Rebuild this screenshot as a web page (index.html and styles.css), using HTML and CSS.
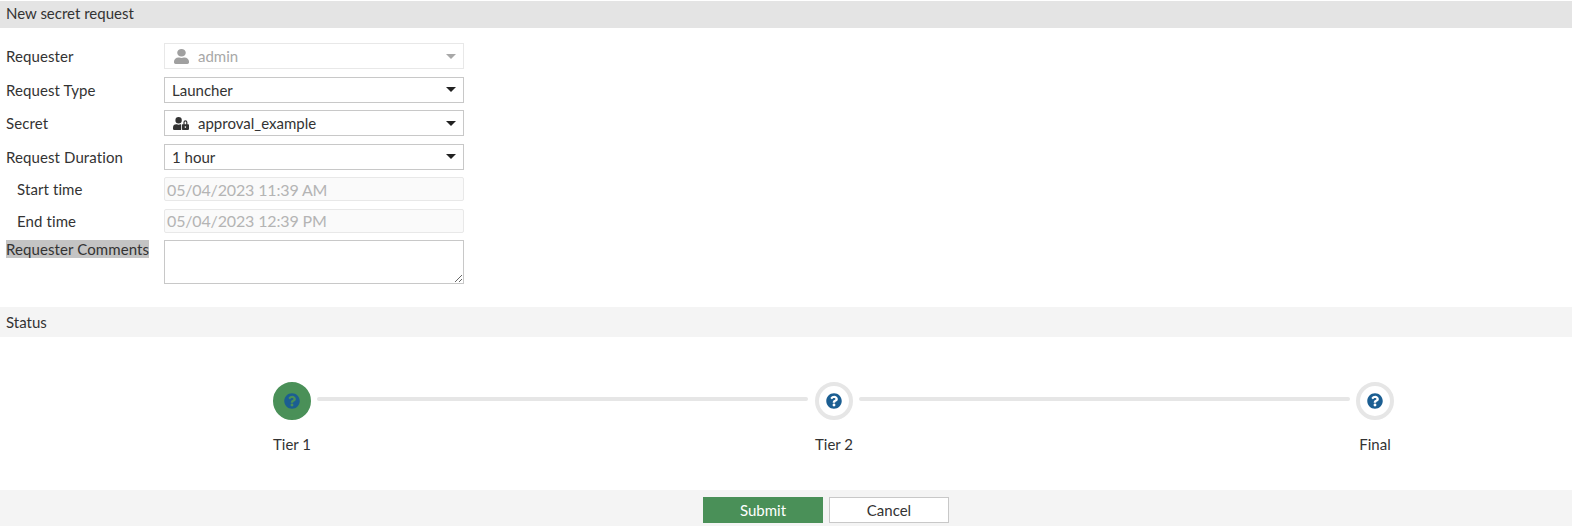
FILE: index.html
```html
<!DOCTYPE html>
<html lang="en">
<head>
  <meta charset="UTF-8">
  <meta name="viewport" content="width=device-width, initial-scale=1.0">
  <title>New secret request</title>
  <link rel="stylesheet" href="styles.css">
</head>
<body>
  <div class="page">
    <div class="page-title">New secret request</div>

    <div class="form">
      <label class="form-label">Requester</label>
      <div class="select select-disabled">
        <svg class="select-icon" viewBox="0 0 448 512" preserveAspectRatio="none"><path d="M224 256c70.7 0 128-57.3 128-128S294.7 0 224 0 96 57.3 96 128s57.3 128 128 128zm89.6 32h-16.7c-22.2 10.2-46.9 16-72.9 16s-50.6-5.8-72.9-16h-16.7C60.2 288 0 348.2 0 422.4V464c0 26.5 21.5 48 48 48h352c26.5 0 48-21.5 48-48v-41.6c0-74.2-60.2-134.4-134.4-134.4z"/></svg>
        <span>admin</span>
        <i class="caret"></i>
      </div>

      <label class="form-label">Request Type</label>
      <div class="select">
        <span>Launcher</span>
        <i class="caret"></i>
      </div>

      <label class="form-label">Secret</label>
      <div class="select">
        <svg class="select-icon select-icon-lock" viewBox="0 0 640 512"><path d="M224 256A128 128 0 1 0 96 128a128 128 0 0 0 128 128zm96 64a63.08 63.08 0 0 1 8.1-30.5c-4.8-.5-9.5-1.5-14.5-1.5h-16.7a174.08 174.08 0 0 1-145.8 0h-16.7A134.43 134.43 0 0 0 0 422.4V464a48 48 0 0 0 48 48h280.9a63.54 63.54 0 0 1-8.9-32zm288-32h-32v-80a80 80 0 0 0-160 0v80h-32a32 32 0 0 0-32 32v160a32 32 0 0 0 32 32h224a32 32 0 0 0 32-32V320a32 32 0 0 0-32-32zM496 432a32 32 0 1 1 32-32 32 32 0 0 1-32 32zm32-144H464v-80a32 32 0 0 1 64 0z"/></svg>
        <span>approval_example</span>
        <i class="caret"></i>
      </div>

      <label class="form-label">Request Duration</label>
      <div class="select">
        <span>1 hour</span>
        <i class="caret"></i>
      </div>

      <label class="form-label form-label-sub">Start time</label>
      <input class="date-input" type="text" value="05/04/2023 11:39 AM" disabled>

      <label class="form-label form-label-sub">End time</label>
      <input class="date-input" type="text" value="05/04/2023 12:39 PM" disabled>

      <label class="form-label form-label-top"><span class="selected-text">Requester Comments</span></label>
      <textarea class="comments"></textarea>
    </div>

    <div class="section-title">Status</div>

    <div class="steps">
      <div class="step step-active">
        <div class="step-circle">
          <svg class="step-icon" viewBox="0 0 512 512"><path d="M504 256c0 136.997-111.043 248-248 248S8 392.997 8 256C8 119.083 119.043 8 256 8s248 111.083 248 248zM262.655 90c-54.497 0-89.255 22.957-116.549 63.758-3.536 5.286-2.353 12.415 2.715 16.258l34.699 26.31c5.205 3.947 12.621 3.008 16.665-2.122 17.864-22.658 30.113-35.797 57.303-35.797 20.429 0 45.698 13.148 45.698 32.958 0 14.976-12.363 22.667-32.534 33.976C247.128 238.528 216 254.941 216 296v4c0 6.627 5.373 12 12 12h56c6.627 0 12-5.373 12-12v-1.333c0-28.462 83.186-29.647 83.186-106.667 0-58.002-60.165-102-116.531-102zM256 338c-25.365 0-46 20.635-46 46 0 25.364 20.635 46 46 46s46-20.636 46-46c0-25.365-20.635-46-46-46z"/></svg>
        </div>
        <div class="step-label">Tier 1</div>
      </div>
      <div class="step-line"></div>
      <div class="step">
        <div class="step-circle">
          <svg class="step-icon" viewBox="0 0 512 512"><path d="M504 256c0 136.997-111.043 248-248 248S8 392.997 8 256C8 119.083 119.043 8 256 8s248 111.083 248 248zM262.655 90c-54.497 0-89.255 22.957-116.549 63.758-3.536 5.286-2.353 12.415 2.715 16.258l34.699 26.31c5.205 3.947 12.621 3.008 16.665-2.122 17.864-22.658 30.113-35.797 57.303-35.797 20.429 0 45.698 13.148 45.698 32.958 0 14.976-12.363 22.667-32.534 33.976C247.128 238.528 216 254.941 216 296v4c0 6.627 5.373 12 12 12h56c6.627 0 12-5.373 12-12v-1.333c0-28.462 83.186-29.647 83.186-106.667 0-58.002-60.165-102-116.531-102zM256 338c-25.365 0-46 20.635-46 46 0 25.364 20.635 46 46 46s46-20.636 46-46c0-25.365-20.635-46-46-46z"/></svg>
        </div>
        <div class="step-label">Tier 2</div>
      </div>
      <div class="step-line"></div>
      <div class="step">
        <div class="step-circle">
          <svg class="step-icon" viewBox="0 0 512 512"><path d="M504 256c0 136.997-111.043 248-248 248S8 392.997 8 256C8 119.083 119.043 8 256 8s248 111.083 248 248zM262.655 90c-54.497 0-89.255 22.957-116.549 63.758-3.536 5.286-2.353 12.415 2.715 16.258l34.699 26.31c5.205 3.947 12.621 3.008 16.665-2.122 17.864-22.658 30.113-35.797 57.303-35.797 20.429 0 45.698 13.148 45.698 32.958 0 14.976-12.363 22.667-32.534 33.976C247.128 238.528 216 254.941 216 296v4c0 6.627 5.373 12 12 12h56c6.627 0 12-5.373 12-12v-1.333c0-28.462 83.186-29.647 83.186-106.667 0-58.002-60.165-102-116.531-102zM256 338c-25.365 0-46 20.635-46 46 0 25.364 20.635 46 46 46s46-20.636 46-46c0-25.365-20.635-46-46-46z"/></svg>
        </div>
        <div class="step-label">Final</div>
      </div>
    </div>

    <div class="footer">
      <button class="btn btn-primary">Submit</button>
      <button class="btn">Cancel</button>
    </div>
  </div>
</body>
</html>
```

FILE: styles.css
```css
html, body {
  margin: 0;
  background-color: #fff;
}

body {
  font-family: Lato, "Open Sans", sans-serif;
  font-size: 15px;
  color: #333;
  overflow: hidden;
}

.page {
  width: 1572px;
  padding-top: 1px;
}

.page-title {
  height: 27px;
  line-height: 25px;
  padding-left: 6px;
  background-color: #e4e4e4;
}

.form {
  display: grid;
  grid-template-columns: 164px 300px;
  row-gap: 7.5px;
  padding-top: 15px;
  align-items: center;
}

.form-label {
  padding-left: 6px;
  letter-spacing: 0.1px;
}

.form-label-sub {
  padding-left: 17px;
}

.form-label-top {
  align-self: start;
  line-height: 18px;
}

.selected-text {
  display: inline-block;
  background-color: #c4c4c4;
}

.select {
  display: flex;
  align-items: center;
  box-sizing: border-box;
  height: 26px;
  padding: 0 7px;
  background-color: #fff;
  border: 1px solid #c8c8c8;
}

.select-disabled {
  border-color: #e8e8e8;
  color: #a8a8a8;
}

.select-icon {
  width: 15px;
  height: 15px;
  margin-right: 9px;
  margin-left: 2px;
  fill: #333;
}

.select-icon-lock {
  width: 16px;
  height: 13px;
  margin-left: 1px;
}

.select-disabled .select-icon {
  fill: #a0a0a0;
}

.caret {
  width: 0;
  height: 0;
  margin-left: auto;
  border-left: 5px solid transparent;
  border-right: 5px solid transparent;
  border-top: 5px solid #222;
}

.select-disabled .caret {
  border-top-color: #a8a8a8;
}

.date-input {
  box-sizing: border-box;
  width: 300px;
  height: 24px;
  padding: 0 2px;
  font-family: Lato, "Open Sans", sans-serif;
  font-size: 16px;
  letter-spacing: -0.15px;
  color: #b4b4b4;
  background-color: #fafafa;
  border: 1px solid #e8e8e8;
  border-radius: 2px;
}

.comments {
  display: block;
  box-sizing: border-box;
  width: 300px;
  height: 44px;
  margin: 0;
  background-color: #fff;
  border: 1px solid #c8c8c8;
  border-radius: 0;
}

.section-title {
  height: 30px;
  line-height: 30px;
  margin-top: 23px;
  padding-left: 6px;
  background-color: #f4f4f4;
}

.steps {
  display: grid;
  grid-template-columns: 38px 504px 38px 503px 38px;
  height: 153px;
  box-sizing: border-box;
  padding: 45px 0 0 273px;
}

.step {
  display: flex;
  flex-direction: column;
  align-items: center;
}

.step-circle {
  display: flex;
  align-items: center;
  justify-content: center;
  box-sizing: border-box;
  width: 38px;
  height: 38px;
  border: 4px solid #e6e6e6;
  border-radius: 50%;
  background-color: #fff;
}

.step-active .step-circle {
  background-color: #4a9058;
  border-color: #4a9058;
}

.step-icon {
  width: 16px;
  height: 16px;
  fill: #1b5e92;
}

.step-label {
  margin-top: 15px;
  white-space: nowrap;
  line-height: 18px;
}

.step-line {
  width: 491px;
  height: 4px;
  margin: 15px 0 0 6px;
  background-color: #e6e6e6;
  border-radius: 2px;
}

.footer {
  display: flex;
  justify-content: center;
  gap: 6px;
  height: 36px;
  box-sizing: border-box;
  padding: 7px 0 0 80px;
  background-color: #f4f4f4;
}

.btn {
  box-sizing: border-box;
  width: 120px;
  height: 26px;
  padding: 0;
  font-family: Lato, "Open Sans", sans-serif;
  font-size: 15px;
  color: #333;
  background-color: #fff;
  border: 1px solid #c8c8c8;
}

.btn-primary {
  color: #fff;
  background-color: #4a9058;
  border-color: #4a9058;
}
```
